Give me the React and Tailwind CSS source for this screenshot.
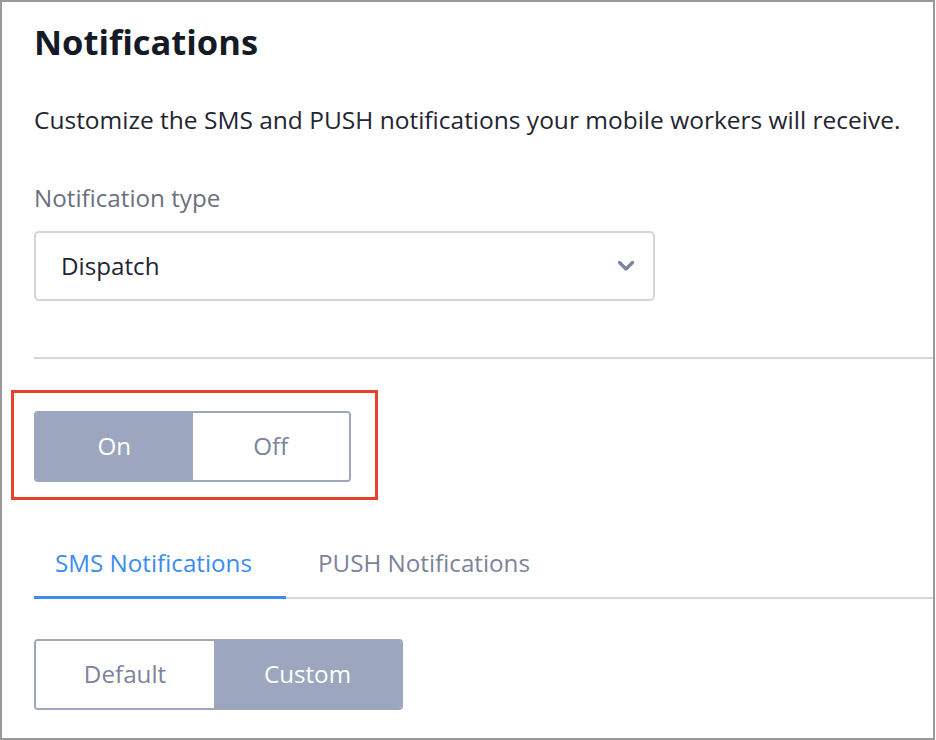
import React, { useState } from "react";

const FONT = { fontFamily: "'Open Sans', 'Noto Sans', sans-serif" };

export default function App() {
  const [enabled, setEnabled] = useState(true);
  const [tab, setTab] = useState("sms");
  const [mode, setMode] = useState("custom");

  return (
    <div className="w-[936px] h-[740px] bg-white overflow-hidden" style={FONT}>
      <div className="w-[935px] h-[740px] border-2 border-[#999999] pl-8 pt-[18px] overflow-hidden">
        {/* header */}
        <h1 className="text-[34.5px] leading-[44px] font-bold text-[#151b26]">Notifications</h1>
        <p className="mt-[42px] text-[24.5px] leading-[28px] text-[#1f2532] whitespace-nowrap">
          Customize the SMS and PUSH notifications your mobile workers will receive.
        </p>

        {/* notification type */}
        <div className="mt-[50px] text-[24.2px] leading-[28px] text-[#6b7080]">Notification type</div>
        <div className="mt-[19px] w-[621px] h-[70px] border-2 border-[#d3d4dc] rounded-[5px] flex items-center justify-between pl-[25px] pr-[18px]">
          <span className="text-[24.2px] text-[#1f2532]">Dispatch</span>
          <svg width="18" height="12" viewBox="0 0 18 12">
            <path d="M2.5 2.5l6.5 6.5 6.5-6.5" fill="none" stroke="#7b8499" strokeWidth="3.2" strokeLinecap="round" strokeLinejoin="round" />
          </svg>
        </div>

        <div className="mt-[56px] h-[2px] bg-[#d6d6dc]" />

        {/* on / off, highlighted */}
        <div className="mt-[31px] -ml-[23px] w-[367px] h-[110px] border-[3px] border-[#e8412c] pl-[20px] pt-[18px]">
          <div className="flex w-[317px] h-[71px] border-2 border-[#9ca6be] rounded-[4px] overflow-hidden text-[24.2px]">
            <button
              onClick={() => setEnabled(true)}
              className={`flex-1 ${enabled ? "bg-[#9ca6be] text-white" : "bg-white text-[#7b8499]"}`}
            >
              On
            </button>
            <button
              onClick={() => setEnabled(false)}
              className={`flex-1 ${!enabled ? "bg-[#9ca6be] text-white" : "bg-white text-[#7b8499]"}`}
            >
              Off
            </button>
          </div>
        </div>

        {/* tabs */}
        <div className="mt-[39px] flex border-b-2 border-[#d6d6dc] text-[24.2px]">
          <button
            onClick={() => setTab("sms")}
            className={`w-[252px] h-[60px] pb-[9px] -mb-[2px] border-b-[3px] text-left pl-[21px] ${tab === "sms" ? "border-[#3b8cf1] text-[#3b8cf1]" : "border-transparent text-[#7b8499]"}`}
          >
            SMS Notifications
          </button>
          <button
            onClick={() => setTab("push")}
            className={`h-[60px] pb-[9px] -mb-[2px] border-b-[3px] pl-[32px] pr-4 ${tab === "push" ? "border-[#3b8cf1] text-[#3b8cf1]" : "border-transparent text-[#7b8499]"}`}
          >
            PUSH Notifications
          </button>
        </div>

        {/* default / custom */}
        <div className="mt-[40px] flex w-[369px] h-[71px] border-2 border-[#9ca6be] rounded-[4px] overflow-hidden text-[24.2px]">
          <button
            onClick={() => setMode("default")}
            className={`w-[178px] ${mode === "default" ? "bg-[#9ca6be] text-white" : "bg-white text-[#7b8499]"}`}
          >
            Default
          </button>
          <button
            onClick={() => setMode("custom")}
            className={`flex-1 ${mode === "custom" ? "bg-[#9ca6be] text-white" : "bg-white text-[#7b8499]"}`}
          >
            Custom
          </button>
        </div>
      </div>
    </div>
  );
}
